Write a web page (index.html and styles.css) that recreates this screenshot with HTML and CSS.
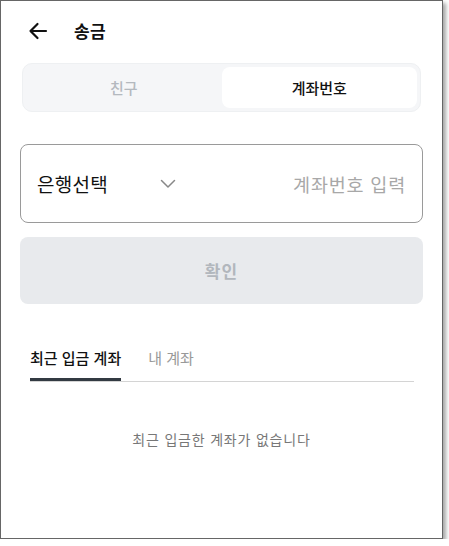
FILE: index.html
```html
<!DOCTYPE html>
<html lang="ko">
<head>
<meta charset="utf-8">
<link rel="stylesheet" href="styles.css">
</head>
<body>
<div class="frame">
  <header class="topbar">
    <svg class="back" width="20" height="18" viewBox="0 0 20 18"><path d="M18 9H2.5M9.5 2L2.5 9l7 7" fill="none" stroke="#111" stroke-width="2.2" stroke-linecap="round" stroke-linejoin="round"/></svg>
    <h1 class="title">송금</h1>
  </header>
  <div class="segment">
    <div class="seg-item">친구</div>
    <div class="seg-item active">계좌번호</div>
  </div>
  <div class="inputbox">
    <div class="bank">
      <span>은행선택</span>
      <svg class="chev" width="16" height="10" viewBox="0 0 16 10"><path d="M1.5 1.5L8 8l6.5-6.5" fill="none" stroke="#888" stroke-width="1.5" stroke-linecap="round" stroke-linejoin="round"/></svg>
    </div>
    <div class="placeholder">계좌번호 입력</div>
  </div>
  <button class="confirm">확인</button>
  <nav class="tabs">
    <div class="tab active">최근 입금 계좌</div>
    <div class="tab">내 계좌</div>
  </nav>
  <p class="empty">최근 입금한 계좌가 없습니다</p>
</div>
</body>
</html>
```
FILE: styles.css
```css
* { box-sizing: border-box; }
html, body { margin: 0; padding: 0; background: #fff; }
body { font-family: "Noto Sans CJK KR", "Noto Sans", sans-serif; color: #111; }
.frame {
  width: 443px;
  height: 539px;
  border: 1px solid #666;
  box-shadow: 3px 3px 4px rgba(0,0,0,0.35);
  background: #fff;
  padding: 0 19px;
  display: flex;
  flex-direction: column;
}
.topbar {
  height: 62px;
  display: flex;
  align-items: center;
  padding-left: 8px;
  padding-bottom: 3px;
  gap: 26px;
}
.back { display: block; }
.title { margin: 0; font-size: 17px; font-weight: 700; letter-spacing: 0.3px; }
.segment {
  margin: 0 2px 0 2px;
  height: 49px;
  background: #f5f6f8;
  border: 1px solid #eef0f2;
  border-radius: 10px;
  padding: 3px;
  display: flex;
}
.seg-item {
  flex: 1;
  display: flex;
  align-items: center;
  justify-content: center;
  font-size: 15px;
  font-weight: 500;
  color: #b4b9bf;
  border-radius: 8px;
}
.seg-item.active { background: #fff; color: #111; }
.inputbox {
  margin-top: 32px;
  height: 79px;
  border: 1px solid #9a9a9a;
  border-radius: 8px;
  display: flex;
  align-items: center;
  justify-content: space-between;
  padding: 0 16px 0 16px;
}
.bank { display: flex; align-items: center; gap: 52px; font-size: 19px; font-weight: 400; color: #111; letter-spacing: 0.3px; }
.chev { display: block; margin-top: 1px; }
.placeholder { font-size: 18.5px; color: #a8a8a8; letter-spacing: 0.8px; }
.confirm {
  margin-top: 14px;
  height: 67px;
  border: 0;
  border-radius: 8px;
  background: #e8eaed;
  font-family: inherit;
  font-size: 17px;
  font-weight: 700;
  color: #b2b7bd;
  letter-spacing: 1px;
}
.tabs {
  margin: 43px 9px 0 10px;
  display: flex;
  gap: 27px;
  border-bottom: 1px solid #d4d4d4;
}
.tab {
  font-size: 15px;
  color: #999;
  padding-bottom: 13px;
  letter-spacing: 0;
}
.tab.active {
  color: #111;
  font-weight: 500;
  box-shadow: inset 0 -3px 0 #333a42;
}
.empty {
  margin: 47px 0 0;
  text-align: center;
  font-size: 14px;
  color: #777;
  letter-spacing: 0.8px;
}
```
